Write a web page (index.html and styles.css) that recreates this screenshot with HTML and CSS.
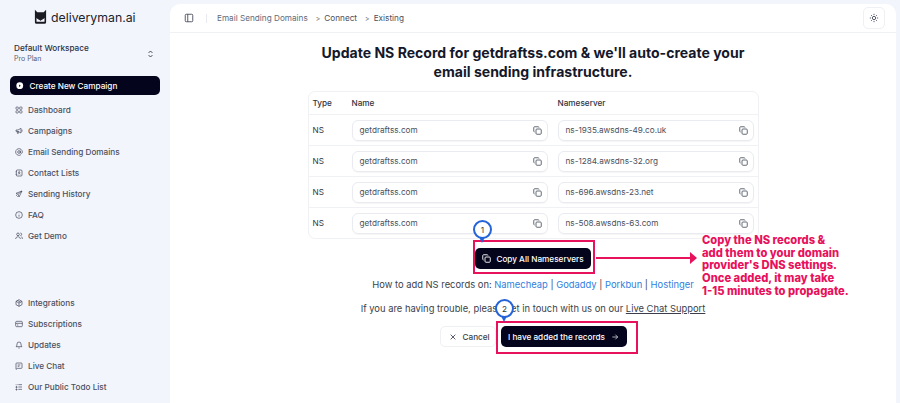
FILE: index.html
```html
<!DOCTYPE html>
<html lang="en">
<head>
<meta charset="utf-8">
<title>Connect</title>
<link rel="stylesheet" href="styles.css">
</head>
<body>
<svg class="defs" width="0" height="0" aria-hidden="true">
  <symbol id="copy" viewBox="0 0 24 24"><rect x="8" y="8" width="14" height="14" rx="2.5" fill="none" stroke="currentColor" stroke-width="2.4"/><path d="M4 16c-1.1 0-2-.9-2-2V4c0-1.1.9-2 2-2h10c1.100 0 2 .9 2 2" fill="none" stroke="currentColor" stroke-width="2.400"/></symbol>
</svg>
<div class="app">
  <aside class="sidebar">
    <div class="brand">
      <svg class="logo" viewBox="0 0 16 20"><path d="M1 1l3 3h8l3-3v15.500a2 2 0 0 1-2 2H3a2 2 0 0 1-2-2z" fill="#1a1a22"/><path d="M3 11l5 3.500 5-3.500v5H3z" fill="#f3f5fd"/><path d="M3 11l5 3 5-3" fill="none" stroke="#1a1a22" stroke-width="1"/></svg>
      <span>deliveryman.ai</span>
    </div>
    <div class="workspace">
      <div>
        <div class="ws-name">Default Workspace</div>
        <div class="ws-plan">Pro Plan</div>
      </div>
      <svg class="ws-chev" viewBox="0 0 24 24"><path d="M7 9l5-5 5 5M7 15l5 5 5-5" fill="none" stroke="currentColor" stroke-width="2.400"/></svg>
    </div>
    <a class="create">
      <svg viewBox="0 0 24 24"><circle cx="12" cy="12" r="11" fill="#fff"/><path d="M10 8l5 4-5 4z" fill="#04041c"/></svg>
      Create New Campaign
    </a>
    <nav class="nav nav-top">
      <a><svg viewBox="0 0 24 24"><rect x="3" y="3" width="7" height="7" rx="2"/><rect x="14" y="3" width="7" height="7" rx="2"/><rect x="3" y="14" width="7" height="7" rx="2"/><rect x="14" y="14" width="7" height="7" rx="2"/></svg>Dashboard</a>
      <a><svg viewBox="0 0 24 24"><path d="M3 9h6l9-5v14l-9-5H3zM7 13v6h3v-6M21 8v6"/></svg>Campaigns</a>
      <a><svg viewBox="0 0 24 24"><circle cx="12" cy="12" r="4"/><path d="M16 8v5a3 3 0 0 0 6 0v-1a10 10 0 1 0-4 8"/></svg>Email Sending Domains</a>
      <a><svg viewBox="0 0 24 24"><rect x="4" y="3" width="17" height="18" rx="3"/><circle cx="12.500" cy="10" r="2"/><path d="M9 16c1-3 6-3 7 0M2 8h3M2 16h3"/></svg>Contact Lists</a>
      <a><svg viewBox="0 0 24 24"><path d="M21 3L3 10l6 3 3 8zM21 3L9 13"/><path d="M3 17l3-2M6 21l2-2"/></svg>Sending History</a>
      <a><svg viewBox="0 0 24 24"><circle cx="12" cy="12" r="10"/><path d="M12 11v6M12 7v.5"/></svg>FAQ</a>
      <a><svg viewBox="0 0 24 24"><circle cx="9" cy="7" r="4"/><path d="M2 21c0-9 14-9 14 0M16 3a4 4 0 0 1 0 8M19 14c2 1 3 3 3 7"/></svg>Get Demo</a>
    </nav>
    <nav class="nav nav-bottom">
      <a><svg viewBox="0 0 24 24"><path d="M12 2l9 5v10l-9 5-9-5V7zM3 7l9 5 9-5M12 12v10M7.500 4.500l9 5"/></svg>Integrations</a>
      <a><svg viewBox="0 0 24 24"><rect x="2" y="4" width="20" height="16" rx="3"/><path d="M2 10h20M6 15h4"/></svg>Subscriptions</a>
      <a><svg viewBox="0 0 24 24"><path d="M6 9a6 6 0 0 1 12 0c0 6 3 8 3 8H3s3-2 3-8M10 21h4"/></svg>Updates</a>
      <a><svg viewBox="0 0 24 24"><path d="M3 5a2 2 0 0 1 2-2h14a2 2 0 0 1 2 2v12a2 2 0 0 1-2 2H8l-5 3zM8 9h8M8 13h5"/></svg>Live Chat</a>
      <a><svg viewBox="0 0 24 24"><path d="M10 5h11M10 12h11M10 19h11M3 5l1.500 1.500L7 4M3 11h3v3H3zM3 18h3v3H3z"/></svg>Our Public Todo List</a>
    </nav>
  </aside>

  <main class="main">
    <header class="topbar">
      <svg class="panel-icon" viewBox="0 0 24 24"><rect x="3" y="3" width="18" height="18" rx="2.500"/><path d="M9 3v18"/></svg>
      <span class="divider"></span>
      <span class="crumb">Email Sending Domains</span>
      <span class="sep">&gt;</span>
      <span class="crumb crumb-dark">Connect</span>
      <span class="sep">&gt;</span>
      <span class="crumb crumb-dark">Existing</span>
      <button class="theme" aria-label="Theme">
        <svg viewBox="0 0 24 24"><circle cx="12" cy="12" r="4"/><path d="M12 2v3M12 19v3M2 12h3M19 12h3M5 5l2 2M17 17l2 2M5 19l2-2M17 7l2-2"/></svg>
      </button>
    </header>

    <section class="content">
      <h1>Update NS Record for getdraftss.com &amp; we'll auto-create your email sending infrastructure.</h1>
      <div class="records">
        <div class="row row-head"><span>Type</span><span>Name</span><span>Nameserver</span></div>
        <div class="row"><span>NS</span><div class="field">getdraftss.com<svg><use href="#copy"/></svg></div><div class="field">ns-1935.awsdns-49.co.uk<svg><use href="#copy"/></svg></div></div>
        <div class="row"><span>NS</span><div class="field">getdraftss.com<svg><use href="#copy"/></svg></div><div class="field">ns-1284.awsdns-32.org<svg><use href="#copy"/></svg></div></div>
        <div class="row"><span>NS</span><div class="field">getdraftss.com<svg><use href="#copy"/></svg></div><div class="field">ns-696.awsdns-23.net<svg><use href="#copy"/></svg></div></div>
        <div class="row"><span>NS</span><div class="field">getdraftss.com<svg><use href="#copy"/></svg></div><div class="field">ns-508.awsdns-63.com<svg><use href="#copy"/></svg></div></div>
      </div>
      <button class="btn-dark copy-all"><svg><use href="#copy"/></svg>Copy All Nameservers</button>
      <p class="howto">How to add NS records on: <a>Namecheap</a> | <a>Godaddy</a> | <a>Porkbun</a> | <a>Hostinger</a></p>
      <p class="trouble">If you are having trouble, please get in touch with us on our <u>Live Chat Support</u></p>
      <div class="actions">
        <button class="btn-light"><svg viewBox="0 0 24 24"><path d="M5 5l14 14M19 5L5 19"/></svg>Cancel</button>
        <button class="btn-dark added">I have added the records<svg viewBox="0 0 24 24"><path d="M4 12h16M13 5l7 7-7 7"/></svg></button>
      </div>
    </section>
  </main>
</div>

<div class="box box-one"></div>
<div class="box box-two"></div>
<div class="pin pin-one">1</div>
<div class="pin pin-two">2</div>
<svg class="arrow" viewBox="0 0 101 12"><path d="M0 6h96" stroke="#e8115b" stroke-width="2"/><path d="M94 0l7 6-7 6z" fill="#e8115b"/></svg>
<div class="note">Copy the NS records &amp;<br>add them to your domain<br>provider's DNS settings.<br>Once added, it may take<br>1-15 minutes to propagate.</div>
</body>
</html>
```

FILE: styles.css
```css
* { box-sizing: border-box; }
html, body { margin: 0; height: 403px; overflow: hidden; }
body { font-family: Inter, "Liberation Sans", sans-serif; background: #f3f5fd; color: #1f2430; position: relative; }
.defs { position: absolute; }
.app { display: flex; height: 403px; }

.sidebar { width: 170px; flex: none; padding: 0 10px; display: flex; flex-direction: column; }
.brand { display: flex; align-items: center; gap: 4px; padding: 6px 0 0 24px; height: 28px; font-size: 12.300px; color: #20232c; }
.logo { width: 13px; height: 16px; }
.workspace { display: flex; align-items: center; justify-content: space-between; margin-top: 15px; padding: 0 5px 0 4px; }
.ws-name { font-size: 8.200px; font-weight: 500; line-height: 11px; color: #2c3140; }
.ws-plan { font-size: 7px; line-height: 10px; color: #5c6270; }
.ws-chev { width: 9px; height: 10px; color: #333; }
.create { display: flex; align-items: center; gap: 6px; height: 19px; margin-top: 12px; padding-left: 6px; background: #04041c; color: #fff; border-radius: 5px; font-size: 8.200px; font-weight: 500; }
.create svg { width: 7.500px; height: 7.500px; }
.nav { display: flex; flex-direction: column; }
.nav a { display: flex; align-items: center; gap: 5px; height: 21.100px; padding-left: 5px; font-size: 8.200px; color: #4a5060; font-weight: 500; }
.nav svg { width: 8px; height: 8px; fill: none; stroke: #3b4050; stroke-width: 2; flex: none; }
.nav-top { margin-top: 4px; }
.nav-bottom { margin-top: auto; padding-bottom: 5px; }

.main { flex: none; width: 726px; margin-top: 4px; background: #fff; border-radius: 10px 10px 0 0; }
.topbar { display: flex; align-items: center; height: 29px; padding-left: 14px; border-bottom: 1px solid #f0f1f5; font-size: 8.200px; color: #4f5563; }
.panel-icon { width: 10px; height: 10px; fill: none; stroke: #3b4050; stroke-width: 2; }
.divider { width: 1px; height: 9px; background: #e8e9ee; margin: 0 10px 0 12px; }
.crumb { color: #636a7a; }
.crumb-dark { color: #4a4f5c; }
.sep { margin: 0 4px 0 8px; color: #555; font-size: 7px; }
.theme { margin-left: auto; margin-right: 11px; width: 22px; height: 22px; padding: 0; display: flex; align-items: center; justify-content: center; background: #fff; border: 1px solid #eef0f4; border-radius: 5px; }
.theme svg { width: 10px; height: 10px; fill: none; stroke: #3b4050; stroke-width: 2; }

.content { display: flex; flex-direction: column; align-items: center; }
h1 { width: 450px; margin: 10px 0 0; font-size: 14.050px; line-height: 19px; font-weight: 700; text-align: center; color: #14182a; }
.records { width: 451px; margin-top: 10px; border: 1px solid #f0f1f5; border-radius: 7px; font-size: 8.200px; color: #30343f; }
.row { display: grid; grid-template-columns: 29px 196px 196px; column-gap: 10px; padding-left: 4px; align-items: center; height: 31px; border-bottom: 1px solid #f0f1f5; }
.row:last-child { border-bottom: 0; height: 30px; }
.row-head { height: 23px; font-weight: 500; }
.row span { display: block; }
.field { display: flex; align-items: center; justify-content: space-between; height: 21px; padding: 0 5px 0 7px; border: 1px solid #e9ebf0; border-radius: 6px; color: #4a4f5c; box-shadow: 0 1px 1px rgba(20,30,60,.04); }
.field svg { width: 9px; height: 9px; color: #555b68; }
.btn-dark { display: inline-flex; align-items: center; justify-content: center; border: 0; padding: 0; background: #04041c; color: #fff; border-radius: 5px; font-family: inherit; font-size: 8.200px; font-weight: 500; white-space: nowrap; }
.copy-all { gap: 5px; width: 116px; height: 21px; margin-top: 9px; }
.copy-all svg { width: 9px; height: 9px; }
.howto, .trouble { margin: 0; font-size: 9.400px; line-height: 14px; color: #3a3f4b; }
.howto { margin-top: 9px; }
.howto a { color: #2f80e0; }
.trouble { margin-top: 10px; }
.actions { display: flex; gap: 5px; margin-top: 10px; }
.btn-light { display: inline-flex; align-items: center; gap: 6px; width: 56px; height: 21px; padding: 0 0 0 8px; background: #fff; border: 1px solid #eef0f4; border-radius: 5px; font-family: inherit; font-size: 8.200px; font-weight: 500; color: #3a3f4b; }
.btn-light svg { width: 8px; height: 8px; fill: none; stroke: #3a3f4b; stroke-width: 2.500; }
.added { gap: 6px; width: 126px; height: 21px; }
.added svg { width: 8px; height: 8px; fill: none; stroke: #fff; stroke-width: 2; }

.box { position: absolute; border: 2px solid #e8115b; }
.box-one { left: 473px; top: 240px; width: 122px; height: 34px; }
.box-two { left: 496px; top: 321px; width: 142px; height: 33px; }
.pin { position: absolute; width: 19px; height: 19px; border: 2px solid #2563d8; border-radius: 50%; background: #fff; color: #333; font-size: 8.200px; display: flex; align-items: center; justify-content: center; }
.pin::after { content: ""; position: absolute; left: 4px; top: 15px; border: 3.500px solid transparent; border-top: 6px solid #2563d8; border-bottom: 0; }
.pin-one { left: 473px; top: 220px; }
.pin-two { left: 495px; top: 299px; }
.arrow { position: absolute; left: 596px; top: 252px; width: 101px; height: 12px; }
.note { position: absolute; left: 702px; top: 234px; font-family: Inter, sans-serif; font-weight: 800; font-size: 11.200px; line-height: 12.700px; color: #e8115b; white-space: nowrap; text-shadow: 0 0 2px #fff, 0 0 2px #fff; }
```
